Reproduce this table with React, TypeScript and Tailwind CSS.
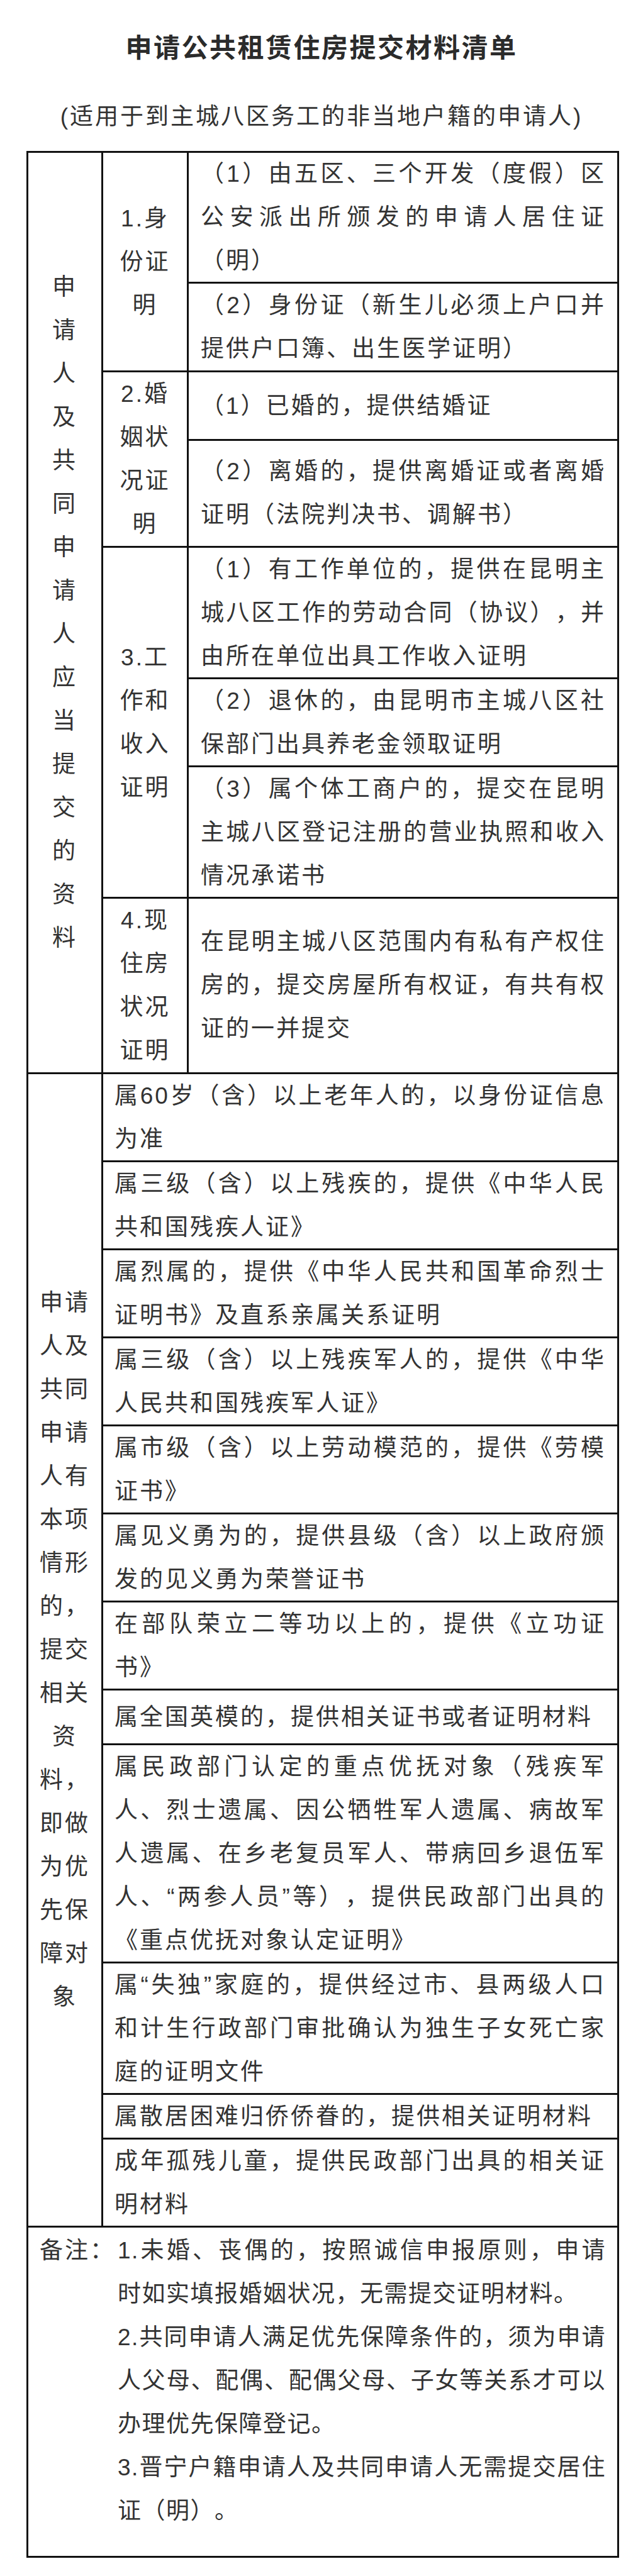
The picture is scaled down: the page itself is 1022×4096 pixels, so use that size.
import clsx from "clsx";

type Item = { text: string; h: string };
type Group = { label: string; items: Item[] };

// section 1: materials every applicant hands in
const groups: Group[] = [
  {
    label: "1.身份证明",
    items: [
      { text: "（1）由五区、三个开发（度假）区公安派出所颁发的申请人居住证（明）", h: "h-[208px]" },
      { text: "（2）身份证（新生儿必须上户口并提供户口簿、出生医学证明）", h: "h-[138px]" },
    ],
  },
  {
    label: "2.婚姻状况证明",
    items: [
      { text: "（1）已婚的，提供结婚证", h: "h-[109px]" },
      { text: "（2）离婚的，提供离婚证或者离婚证明（法院判决书、调解书）", h: "h-[166px]" },
    ],
  },
  {
    label: "3.工作和收入证明",
    items: [
      { text: "（1）有工作单位的，提供在昆明主城八区工作的劳动合同（协议），并由所在单位出具工作收入证明", h: "h-[209px]" },
      { text: "（2）退休的，由昆明市主城八区社保部门出具养老金领取证明", h: "h-[140px]" },
      { text: "（3）属个体工商户的，提交在昆明主城八区登记注册的营业执照和收入情况承诺书", h: "h-[206px]" },
    ],
  },
  {
    label: "4.现住房状况证明",
    items: [
      { text: "在昆明主城八区范围内有私有产权住房的，提交房屋所有权证，有共有权证的一并提交", h: "h-[275px]" },
    ],
  },
];

// section 2: priority cases
const priority: Item[] = [
  { text: "属60岁（含）以上老年人的，以身份证信息为准", h: "h-[140px]" },
  { text: "属三级（含）以上残疾的，提供《中华人民共和国残疾人证》", h: "h-[140px]" },
  { text: "属烈属的，提供《中华人民共和国革命烈士证明书》及直系亲属关系证明", h: "h-[140px]" },
  { text: "属三级（含）以上残疾军人的，提供《中华人民共和国残疾军人证》", h: "h-[140px]" },
  { text: "属市级（含）以上劳动模范的，提供《劳模证书》", h: "h-[140px]" },
  { text: "属见义勇为的，提供县级（含）以上政府颁发的见义勇为荣誉证书", h: "h-[140px]" },
  { text: "在部队荣立二等功以上的，提供《立功证书》", h: "h-[140px]" },
  { text: "属全国英模的，提供相关证书或者证明材料", h: "h-[87px]" },
  {
    text: "属民政部门认定的重点优抚对象（残疾军人、烈士遗属、因公牺牲军人遗属、病故军人遗属、在乡老复员军人、带病回乡退伍军人、“两参人员”等），提供民政部门出具的《重点优抚对象认定证明》",
    h: "h-[347px]",
  },
  { text: "属“失独”家庭的，提供经过市、县两级人口和计生行政部门审批确认为独生子女死亡家庭的证明文件", h: "h-[209px]" },
  { text: "属散居困难归侨侨眷的，提供相关证明材料", h: "h-[71px]" },
  { text: "成年孤残儿童，提供民政部门出具的相关证明材料", h: "h-[137px]" },
];

export default function App() {
  return (
    <div className="min-h-screen bg-white pt-[47px] pb-[30px] text-[#333] [font-family:'Liberation_Sans','Noto_Sans_CJK_SC',sans-serif] [text-spacing-trim:space-all]">
      <h1 className="text-center text-[42px] leading-[60px] font-bold tracking-[2.5px] text-[#2b2b2b]">
        申请公共租赁住房提交材料清单
      </h1>
      <p className="mt-[49px] text-center text-[37px] leading-[60px] tracking-[3px]">
        (适用于到主城八区务工的非当地户籍的申请人)
      </p>

      <div className="mt-[24px] ml-[42px] w-[942px] border-[3px] border-[#111] text-[37px] leading-[69px] tracking-[3px]">
        {/* section 1 */}
        <div className="flex border-b-[3px] border-[#111]">
          <div className="flex w-[119px] shrink-0 items-center justify-center border-r-[3px] border-[#111]">
            <p className="w-[42px] text-center">申请人及共同申请人应当提交的资料</p>
          </div>
          <div className="flex flex-1 flex-col">
            {groups.map((g, gi) => (
              <div key={g.label} className={clsx("flex", gi < groups.length - 1 && "border-b-[3px] border-[#111]")}>
                <div className="flex w-[136px] shrink-0 items-center justify-center border-r-[3px] border-[#111] px-[14px]">
                  <p className="text-center">{g.label}</p>
                </div>
                <div className="flex flex-1 flex-col">
                  {g.items.map((it, ii) => (
                    <div
                      key={ii}
                      className={clsx(
                        "flex items-center pl-[19px] pr-[18px]",
                        it.h,
                        ii < g.items.length - 1 && "border-b-[3px] border-[#111]"
                      )}
                    >
                      <p className="w-full text-justify">{it.text}</p>
                    </div>
                  ))}
                </div>
              </div>
            ))}
          </div>
        </div>

        {/* section 2 */}
        <div className="flex border-b-[3px] border-[#111]">
          <div className="flex w-[119px] shrink-0 items-center justify-center border-r-[3px] border-[#111] px-[6px]">
            <p className="text-center">申请人及共同申请人有本项情形的，提交相关资料，即做为优先保障对象</p>
          </div>
          <div className="flex flex-1 flex-col">
            {priority.map((it, i) => (
              <div
                key={i}
                className={clsx(
                  "flex items-center px-[18px]",
                  it.h,
                  i < priority.length - 1 && "border-b-[3px] border-[#111]"
                )}
              >
                <p className="w-full text-justify">{it.text}</p>
              </div>
            ))}
          </div>
        </div>

        {/* notes */}
        <div className="flex h-[522px] pt-[2px] pl-[18px] pr-[18px]">
          <div className="w-[124px] shrink-0">备注：</div>
          <div className="flex-1 text-justify tracking-[1.5px]">
            <p>
              <span className="block [text-align-last:justify]">1.未婚、丧偶的，按照诚信申报原则，申请</span>
              <span className="block">时如实填报婚姻状况，无需提交证明材料。</span>
            </p>
            <p>2.共同申请人满足优先保障条件的，须为申请人父母、配偶、配偶父母、子女等关系才可以办理优先保障登记。</p>
            <p>3.晋宁户籍申请人及共同申请人无需提交居住证（明）。</p>
          </div>
        </div>
      </div>
    </div>
  );
}
